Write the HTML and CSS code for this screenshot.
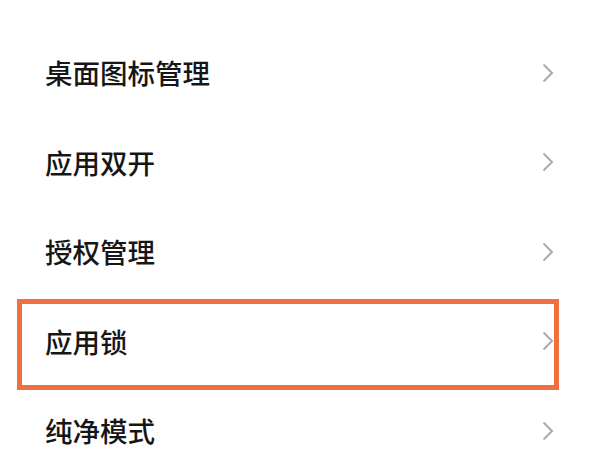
FILE: index.html
```html
<!DOCTYPE html>
<html lang="zh-CN">
<head>
<meta charset="utf-8">
<link rel="stylesheet" href="styles.css">
</head>
<body>
<div class="page">
  <ul class="list">
    <li class="row"><span class="label">桌面图标管理</span><svg class="chev" viewBox="0 0 12 20" width="12" height="20"><polyline points="1.5,1.5 10,10 1.5,18.5"/></svg></li>
    <li class="row"><span class="label">应用双开</span><svg class="chev" viewBox="0 0 12 20" width="12" height="20"><polyline points="1.5,1.5 10,10 1.5,18.5"/></svg></li>
    <li class="row"><span class="label">授权管理</span><svg class="chev" viewBox="0 0 12 20" width="12" height="20"><polyline points="1.5,1.5 10,10 1.5,18.5"/></svg></li>
    <li class="row"><span class="label">应用锁</span><svg class="chev" viewBox="0 0 12 20" width="12" height="20"><polyline points="1.5,1.5 10,10 1.5,18.5"/></svg></li>
    <li class="row"><span class="label">纯净模式</span><svg class="chev" viewBox="0 0 12 20" width="12" height="20"><polyline points="1.5,1.5 10,10 1.5,18.5"/></svg></li>
  </ul>
  <div class="highlight"></div>
</div>
</body>
</html>
```
FILE: styles.css
```css
html, body {
  margin: 0;
  padding: 0;
  background: #ffffff;
}
.page {
  position: relative;
  width: 600px;
  height: 450px;
  overflow: hidden;
  font-family: "Noto Sans CJK SC", "Noto Sans", sans-serif;
}
.list {
  list-style: none;
  margin: 0;
  padding: 28px 0 0 0;
}
.row {
  height: 89.5px;
  display: flex;
  align-items: center;
  justify-content: space-between;
  padding: 0 46px 0 45px;
}
.label {
  font-size: 27.5px;
  font-weight: 500;
  color: #161616;
  line-height: 1;
}
.chev {
  display: block;
}
.chev polyline {
  fill: none;
  stroke: #ababab;
  stroke-width: 2;
}
.highlight {
  position: absolute;
  left: 17px;
  top: 299px;
  width: 532px;
  height: 81px;
  border: 5px solid #f0703f;
}
```
